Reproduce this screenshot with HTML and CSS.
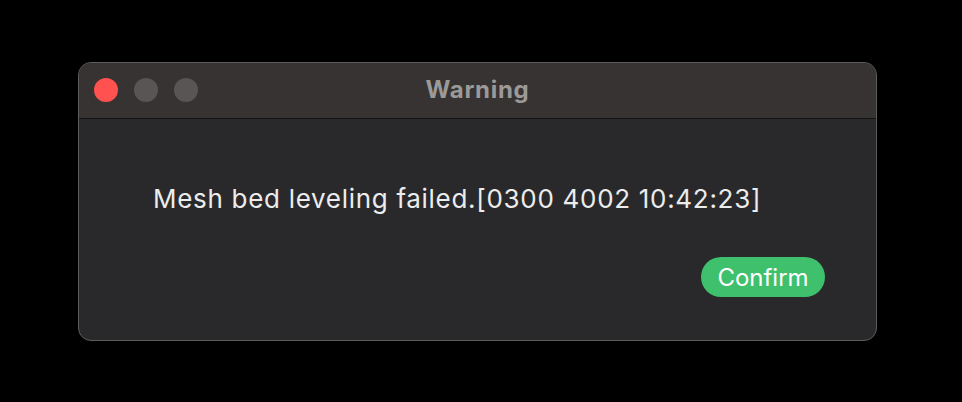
FILE: index.html
```html
<!DOCTYPE html>
<html>
<head>
<meta charset="utf-8">
<link rel="stylesheet" href="styles.css">
</head>
<body>
<div class="stage">
  <div class="window">
    <div class="titlebar">
      <div class="lights">
        <span class="light red"></span>
        <span class="light gray"></span>
        <span class="light gray"></span>
      </div>
      <div class="title">Warning</div>
    </div>
    <div class="content">
      <p class="message">Mesh bed leveling failed.[0300 4002 10:42:23]</p>
      <div class="actions">
        <button class="confirm">Confirm</button>
      </div>
    </div>
  </div>
</div>
</body>
</html>
```
FILE: styles.css
```css
html, body {
  margin: 0;
  padding: 0;
  background: #000;
  width: 962px;
  height: 402px;
  overflow: hidden;
}
.stage {
  padding: 62px 0 0 78px;
}
.window {
  width: 799px;
  height: 279px;
  box-sizing: border-box;
  border: 1px solid #5f5d5c;
  border-radius: 13px;
  background: #29292b;
  overflow: hidden;
  display: flex;
  flex-direction: column;
  font-family: Inter, "Noto Sans", sans-serif;
}
.titlebar {
  position: relative;
  height: 55px;
  background: #373332;
  border-bottom: 1px solid #141414;
  display: flex;
  align-items: center;
  justify-content: center;
  flex-shrink: 0;
}
.lights {
  position: absolute;
  left: 15px;
  top: 15px;
  display: flex;
  gap: 16px;
}
.light {
  width: 24px;
  height: 24px;
  border-radius: 50%;
  display: block;
}
.red { background: #fe5150; }
.gray { background: #585554; }
.title {
  color: #9c9a99;
  font-weight: 700;
  font-size: 24px;
  letter-spacing: 0.7px;
  margin-top: -3px;
}
.content {
  flex: 1;
  padding: 0 51px 0 74px;
  display: flex;
  flex-direction: column;
}
.message {
  margin: 62px 0 0 0;
  color: #ececec;
  font-size: 26px;
  letter-spacing: 0.7px;
  line-height: 36px;
}
.actions {
  display: flex;
  justify-content: flex-end;
  margin-top: 40px;
}
.confirm {
  width: 124px;
  height: 40px;
  border: none;
  border-radius: 20px;
  background: #3fc06d;
  color: #fff;
  font-family: Inter, "Noto Sans", sans-serif;
  font-size: 24px;
  padding: 0;
}
```
